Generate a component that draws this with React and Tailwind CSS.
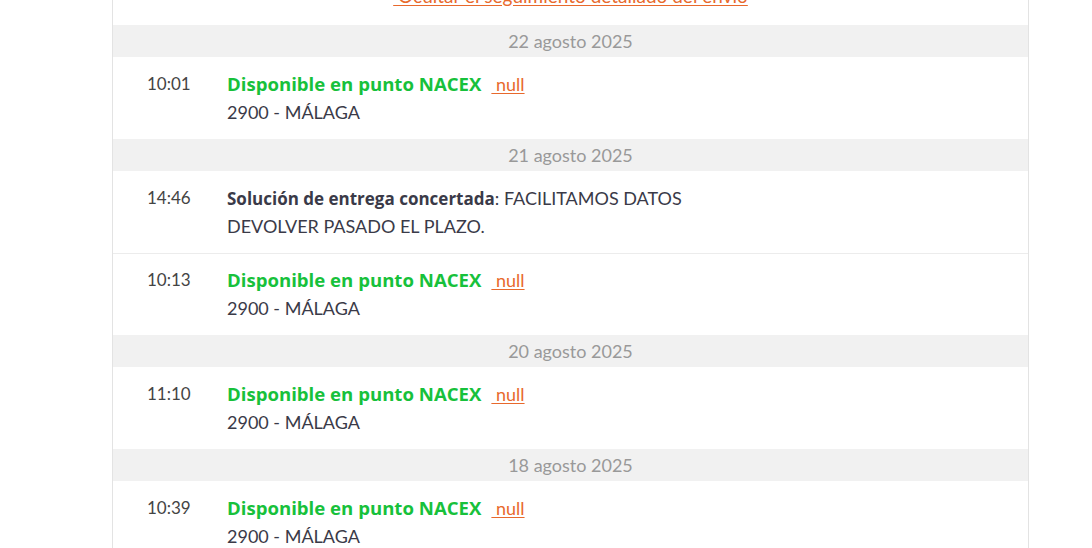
const days = [
  {
    date: '22 agosto 2025',
    events: [{ time: '10:01', type: 'point', place: '2900 - MÁLAGA' }],
  },
  {
    date: '21 agosto 2025',
    events: [
      { time: '14:46', type: 'note', title: 'Solución de entrega concertada', text: 'FACILITAMOS DATOS', text2: 'DEVOLVER PASADO EL PLAZO.' },
      { time: '10:13', type: 'point', place: '2900 - MÁLAGA' },
    ],
  },
  {
    date: '20 agosto 2025',
    events: [{ time: '11:10', type: 'point', place: '2900 - MÁLAGA' }],
  },
  {
    date: '18 agosto 2025',
    events: [{ time: '10:39', type: 'point', place: '2900 - MÁLAGA' }],
  },
];

const boldFont = { fontFamily: '"Open Sans", Lato, sans-serif' };

const EventRow = ({ ev, first }) => (
  <div className={`flex pl-[34px] pb-[13px] ${first ? 'pt-[13px]' : 'pt-[12px] border-t border-[#ececec]'}`}>
    <div className="w-[80px] h-[28px] text-[17px] leading-[28px] text-[#444]">{ev.time}</div>
    <div className="text-[18px] leading-[28px] text-[#3a3a48]">
      {ev.type === 'point' ? (
        <>
          <div className="h-[28px] flex items-baseline whitespace-nowrap">
            <span className="font-bold text-[18.6px] leading-[28px] text-[#17c13b]" style={boldFont}>Disponible en punto NACEX</span>
            <a className="ml-[10px] text-[18px] leading-[28px] text-[#e8692c] underline underline-offset-2">&nbsp;null</a>
          </div>
          <div className="h-[28px]">{ev.place}</div>
        </>
      ) : (
        <>
          <div className="h-[28px] flex items-baseline whitespace-pre">
            <span className="font-bold text-[17px] leading-[28px]" style={boldFont}>{ev.title}</span>
            <span>: {ev.text}</span>
          </div>
          <div className="h-[28px]">{ev.text2}</div>
        </>
      )}
    </div>
  </div>
);

export default function App() {
  return (
    <div className="min-h-[548px] bg-white" style={{ fontFamily: 'Lato, "Open Sans", sans-serif' }}>
      <div className="ml-[112px] w-[917px] border-x border-[#e3e3e3] h-[548px] overflow-hidden">
        <div className="h-[25px] overflow-hidden text-center">
          <a className="block -mt-[18px] text-[19px] leading-[28px] text-[#e8692c] underline underline-offset-2">
            &nbsp;Ocultar el seguimiento detallado del envío
          </a>
        </div>
        {days.map((d) => (
          <div key={d.date}>
            <div className="h-[32px] bg-[#f1f1f1] text-center text-[18px] leading-[32px] text-[#999]">{d.date}</div>
            {d.events.map((ev, i) => (
              <EventRow key={ev.time} ev={ev} first={i === 0} />
            ))}
          </div>
        ))}
      </div>
    </div>
  );
}
